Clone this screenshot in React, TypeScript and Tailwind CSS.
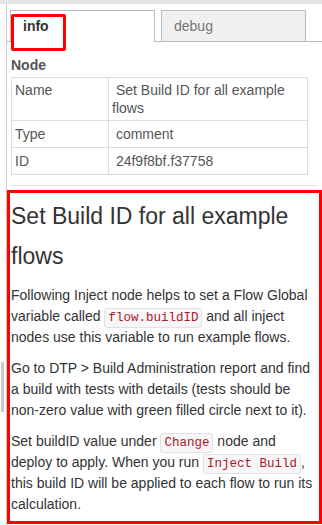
import React from "react";

const Code = ({ children }: { children: React.ReactNode }) => (
  <code className="font-['Liberation_Mono',monospace] text-[12.5px] leading-[14px] px-[3px] py-[2px] border border-[#e1e1e8] bg-[#f7f7f9] text-[#ad1625] rounded-[3px] whitespace-nowrap">
    {children}
  </code>
);

export default function App() {
  return (
    <div className="relative w-[322px] h-[525px] overflow-hidden bg-white font-['Liberation_Sans',Arial,sans-serif]">
      <div className="h-[4px] bg-[#e4e4e4]" />
      <div className="flex h-[521px]">
        <div className="w-[6px] shrink-0" />
        <div className="flex-1 border-l border-[#cccccc] flex flex-col">
          {/* tabs */}
          <div className="flex gap-[6px] pl-[3px] pt-[6px] border-b border-[#bbbbbb]">
            <div className="w-[145px] h-[32px] -mb-px border border-b-0 border-[#bbbbbb] bg-white pl-[12px] text-[14px] leading-[30px] font-bold text-[#333]">
              info
            </div>
            <div className="w-[145px] h-[31px] border border-b-0 border-[#bbbbbb] bg-[#f0f0f0] pl-[12px] text-[14px] leading-[30px] text-[#777]">
              debug
            </div>
          </div>
          {/* content */}
          <div className="px-[4px]">
            <div className="mt-[13px] text-[14px] leading-[20px] font-bold text-[#555]">Node</div>
            <table className="mt-[2px] w-[297px] border-collapse text-[14px] leading-[18px] text-[#555]">
              <tbody>
                <tr>
                  <td className="w-[97px] border border-[#dddddd] px-[3px] py-[3px] align-top">Name</td>
                  <td className="border border-[#dddddd] px-[3px] py-[3px] align-top">
                    {"\u00a0Set Build ID for all example flows"}
                  </td>
                </tr>
                <tr>
                  <td className="border border-[#dddddd] px-[3px] py-[4px] align-top">Type</td>
                  <td className="border border-[#dddddd] px-[3px] py-[4px] align-top">{"\u00a0comment"}</td>
                </tr>
                <tr>
                  <td className="border border-[#dddddd] px-[3px] py-[4px] align-top">ID</td>
                  <td className="border border-[#dddddd] px-[3px] py-[4px] align-top">{"\u00a024f9f8bf.f37758"}</td>
                </tr>
              </tbody>
            </table>
            <div className="mt-[10px] h-px w-[306px] bg-[#e0e0e0]" />
            <div className="w-[306px] text-[#333]">
              <h1 className="mt-[10px] mb-[9px] text-[23px] leading-[40px] font-normal">
                Set Build ID for all example flows
              </h1>
              <p className="mb-[10px] text-[14px] leading-[21px]">
                Following Inject node helps to set a Flow Global variable called <Code>flow.buildID</Code> and all
                inject nodes use this variable to run example flows.
              </p>
              <p className="mb-[10px] text-[14px] leading-[21px]">
                Go to DTP &gt; Build Administration report and find a build with tests with details (tests should be
                non-zero value with green filled circle next to it).
              </p>
              <p className="mb-[10px] text-[14px] leading-[21px]">
                Set buildID value under <Code>Change</Code> node and deploy to apply. When you run{" "}
                <Code>Inject Build</Code>, this build ID will be applied to each flow to run its calculation.
              </p>
            </div>
          </div>
        </div>
      </div>
      {/* sidebar resize handle */}
      <div className="absolute left-[1px] top-[362px] w-[3px] h-[50px] bg-[#cccccc]" />
      {/* annotation overlays */}
      <div className="absolute left-[11px] top-[14px] w-[55px] h-[37px] border-[3px] border-[#ff0000] rounded-[2px]" />
      <div className="absolute left-[7px] top-[190px] w-[315px] h-[334px] border-[3px] border-[#ff0000]" />
    </div>
  );
}
